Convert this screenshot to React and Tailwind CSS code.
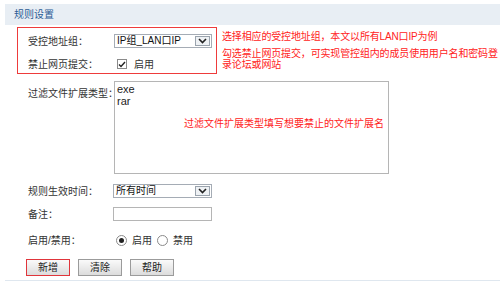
import React from 'react';

const font = { fontFamily: '"Liberation Sans", "Noto Sans CJK SC", sans-serif' };

const Chevron = () => (
  <svg width="9" height="6" viewBox="0 0 9 6">
    <path d="M1 1 L4.5 4.5 L8 1" fill="none" stroke="#222" strokeWidth="1.6" />
  </svg>
);

const FakeSelect = ({ value, className }) => (
  <div className={`flex h-[14px] items-stretch border border-[#a5acb5] bg-white ${className}`}>
    <div className="flex flex-1 items-center pl-[2px] text-[10px] leading-none text-[#111]">{value}</div>
    <div className="m-[1px] flex w-[15px] items-center justify-center border border-[#9aa3ad] bg-[#eef1f4]">
      <Chevron />
    </div>
  </div>
);

const Button = ({ children, red }) => (
  <button
    className={`flex h-[17px] w-[44px] items-center justify-center border bg-gradient-to-b from-[#fafafa] to-[#dcdcdc] text-[10px] leading-none text-[#222] ${
      red ? 'border-[#e0353b]' : 'border-[#9b9b9b]'
    }`}
  >
    {children}
  </button>
);

const Radio = ({ checked }) => (
  <span className="flex h-[11px] w-[11px] items-center justify-center rounded-full border border-[#8a8a8a] bg-white">
    {checked && <span className="h-[5px] w-[5px] rounded-full bg-[#222]" />}
  </span>
);

export default function App() {
  return (
    <div className="h-[283px] w-[500px] overflow-hidden bg-white text-[10px] text-[#333]" style={font}>
      {/* header */}
      <div className="ml-[5px] mt-[4px] flex h-[21px] items-center bg-[#e8eef4] pl-[9px] text-[10px] text-[#2b5a94]">
        规则设置
      </div>

      {/* red box + notes */}
      <div className="mt-[2px] flex">
        <div className="ml-[17px] h-[47px] w-[200px] shrink-0 border border-[#ee3b3b] pl-[10px]">
          <div className="mt-[6px] flex h-[14px] items-center">
            <span className="w-[86px]">受控地址组：</span>
            <FakeSelect value="IP组_LAN口IP" className="w-[98px]" />
          </div>
          <div className="mt-[9px] flex h-[14px] items-center">
            <span className="w-[86px]">禁止网页提交：</span>
            <span className="ml-[3px] flex h-[10px] w-[10px] items-center justify-center border border-[#8a8a8a] bg-white">
              <svg width="8" height="7" viewBox="0 0 8 7">
                <path d="M1 3.5 L3 5.5 L7 1" fill="none" stroke="#222" strokeWidth="1.4" />
              </svg>
            </span>
            <span className="ml-[7px]">启用</span>
          </div>
        </div>
        <div className="ml-[5px] whitespace-nowrap pt-[4px] text-[10px] leading-[12px] tracking-[-0.15px] text-[#f22]">
          <p>选择相应的受控地址组，本文以所有LAN口IP为例</p>
          <p className="mt-[5px] leading-[11px]">
            勾选禁止网页提交，可实现管控组内的成员使用用户名和密码登
            <br />
            录论坛或网站
          </p>
        </div>
      </div>

      {/* extensions */}
      <div className="ml-[28px] mt-[7px] flex">
        <span className="mt-[5px] w-[86px] whitespace-nowrap">过滤文件扩展类型：</span>
        <div className="relative h-[93px] w-[275px] border border-[#b5b5b5] px-[2px] pt-[1px] text-[11px] leading-[12px] text-[#222]">
          <div>exe</div>
          <div>rar</div>
          <span className="absolute left-[69px] top-[36px] text-[10px] text-[#f22]">
            过滤文件扩展类型填写想要禁止的文件扩展名
          </span>
        </div>
      </div>

      {/* schedule */}
      <div className="ml-[28px] mt-[10px] flex h-[14px] items-center">
        <span className="w-[85px]">规则生效时间：</span>
        <FakeSelect value="所有时间" className="w-[99px]" />
      </div>

      {/* remark */}
      <div className="ml-[28px] mt-[9px] flex h-[14px] items-center">
        <span className="w-[85px]">备注：</span>
        <div className="h-[14px] w-[99px] border border-[#b5b5b5] bg-white" />
      </div>

      {/* enable */}
      <div className="ml-[28px] mt-[12px] flex h-[14px] items-center">
        <span className="w-[88px]">启用/禁用：</span>
        <Radio checked />
        <span className="ml-[5px]">启用</span>
        <span className="ml-[5px]" />
        <Radio />
        <span className="ml-[5px]">禁用</span>
      </div>

      {/* buttons */}
      <div className="ml-[26px] mt-[12px] flex gap-[8px]">
        <Button red>新增</Button>
        <Button>清除</Button>
        <Button>帮助</Button>
      </div>

      <div className="ml-[5px] mt-[4px] h-px bg-[#dfe7ef]" />
    </div>
  );
}
